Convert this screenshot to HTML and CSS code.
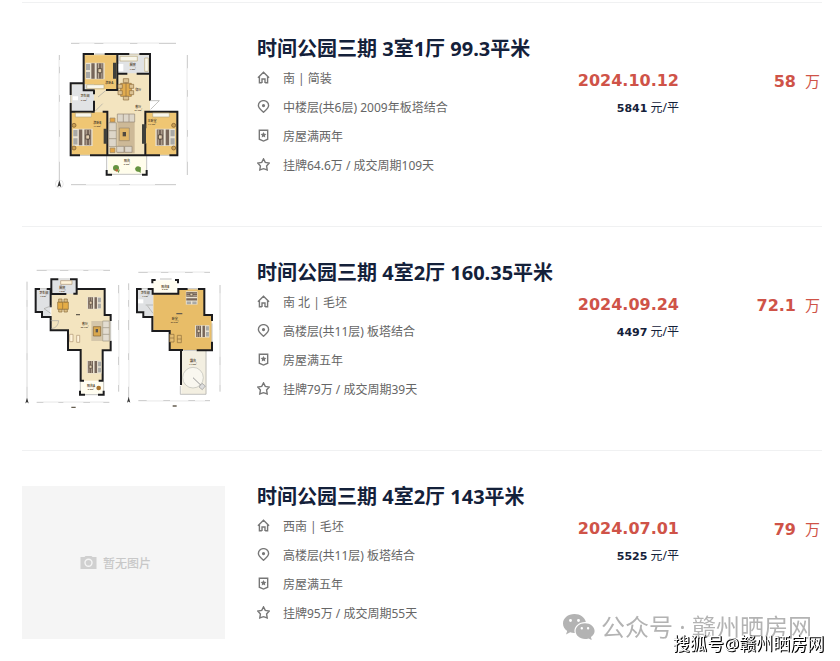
FILE: index.html
```html
<!DOCTYPE html>
<html lang="zh-CN">
<head>
<meta charset="utf-8">
<title>时间公园三期 成交记录</title>
<link rel="stylesheet" href="styles.css">
</head>
<body>
<svg class="defs" width="0" height="0" aria-hidden="true">
  <symbol id="i-home" viewBox="0 0 14 14"><path d="M1 7.200 7 1.400l6 5.800M2.600 6v6.600h2.600M11.400 6v6.600H8.800M5.400 13V8.600h3.200V13"/></symbol>
  <symbol id="i-pin" viewBox="0 0 14 14"><path d="M7 13.200C4.400 10.800 1.500 9 1.500 6a5.500 5.300 0 0 1 11 0c0 3-2.900 4.800-5.500 7.200z"/><circle cx="7" cy="6" r="1" fill="currentColor"/></symbol>
  <symbol id="i-badge" viewBox="0 0 14 14"><path d="M2.500 1.300h9v9.700L7 13l-4.500-2z"/><path d="M7 3.200l1 2 2.100.3-1.500 1.500.3 2.200L7 8.200l-1.900 1 .3-2.200-1.500-1.500L6 5.200z" fill="currentColor" stroke="none"/></symbol>
  <symbol id="i-star" viewBox="0 0 14 14"><path d="M7 1l1.900 3.700 4.300.8-2.900 3 .7 4.300L7 11.500l-4 1.300.7-4.300-2.900-3 4.300-.8z"/></symbol>
  <symbol id="bed" viewBox="0 0 60 54"><path fill="#e9e2d2" d="M0 2h58v50H0z"/><path fill="#77665a" d="M18 4h10v46H18zM34 4h20v46H34z"/><path fill="#b8aa98" d="M38 4h3v46h-3zM48 4h3v46h-3z"/><path fill="#a9a9a6" d="M2 6h12v18H2zM2 30h12v18H2z"/><path fill="#e4ceb0" stroke="#3d352b" stroke-width="2" d="M38 20h11v12H38z"/></symbol>
  <symbol id="north" viewBox="0 0 14 24"><path fill="#333" d="M7 0 13 22 7 17 1 22z"/></symbol>
</svg>

<main class="list">
  <article class="deal">
    <a class="photo" href="#" aria-label="3室1厅户型图">
      <svg viewBox="6 24 609 459">
        <g class="dims"><path d="M153 40h315M153 464h315M118 75v375M502 75v360"/><path class="gap" d="M178 40h45M250 40h80M352 40h65M198 464h100M330 464h75M118 90v20M118 130v65M118 215v85M118 320v75M502 115v65M502 200v100M502 320v75"/></g>
        <path fill="#f3e4bf" d="M190 73h200v172h85v130H152V160h38z"/>
        <path fill="#efc673" d="M193 76h97v102h-97zM155 247h106v127H155zM378 247h92v127h-92z"/>
        <path fill="#e1e3e5" d="M155 163h67v80h-67zM294 76h93v54h-93z"/>
        <path fill="#fffdeb" d="M264 377h114v54H264z"/>
        <g class="thin"><path d="M260 378v44M380 378v44M276 433h90M224 72h30M328 72h30M180 376h30M420 376h28M152 195v24"/></g>
        <path class="wall" d="M222 72h-31v109h33M254 72h74M358 72h32v140M292 74v106h-34M292 131h30M350 131h38M190 160h-38v35M152 219v157h28M210 376h210M448 376h24V245h-96v50M154 245h70M222 181v12M222 212v32M248 245h14v130M376 340v34M260 420v14h16M366 434h14v-14"/>
        <g fill="#3f403c"><path d="M279 98h10v48h-10zM251 296h11v45h-11zM366 283h12v58h-12z"/></g>
        <g fill="#f8f6eb" stroke="#baa878" stroke-width="2"><path d="M200 164h52v12h-52zM166 249h48v12h-48zM398 249h50v12h-50zM300 79h52v14h-52zM374 84h11v40h-11z"/></g>
        <path fill="#fff" d="M296 102h14v22h-14zM158 199h16v12h-16zM390 212h26l-26 24z"/>
        <path class="thin" d="M390 212h28l-26 26M226 243l22-22M258 181l-24 20"/>
        <use href="#bed" x="196" y="96" width="60" height="54"/><use href="#bed" x="158" y="293" width="62" height="58"/>
        <use href="#bed" transform="translate(466 293) scale(-1 1)" width="62" height="58"/>
        <path fill="#cdb997" d="M292 276h52v94h-52z"/>
        <g fill="#ddd6c9" stroke="#948772" stroke-width="2"><path d="M292 252h52v24h-52zM266 278h23v72h-23zM290 349h22v18h-22zM314 349h22v18h-22zM310 252v24M327 252v24M266 302h23M266 326h23"/><path fill="#e1b768" d="M298 294h30v38h-30z"/><path fill="#e3a544" d="M270 264h15v12h-15zM270 354h15v14h-15z"/></g>
        <path fill="#514b40" d="M308 306h10v13h-10z"/>
        <g stroke="#8d6b3c" stroke-width="2" fill="#dcc292"><path fill="#e2ac4e" d="M302 160h32v39h-32z"/><path d="M310 146h16v12h-16zM310 199h16v11h-16zM294 163h13v12h-13zM294 182h13v12h-13zM328 163h13v12h-13zM328 182h13v12h-13zM318 158v42"/></g>
        <g fill="#caa054" stroke="#75552a" stroke-width="2"><circle cx="162" cy="286" r="6"/><circle cx="162" cy="354" r="6"/><circle cx="461" cy="286" r="6"/><circle cx="461" cy="354" r="6"/></g>
        <g fill="#65933f"><circle cx="288" cy="414" r="9"/><circle cx="354" cy="417" r="8"/><path d="M292 424l8-6-4 11zM344 416l18-5v18z"/></g><circle cx="290" cy="421" r="4" fill="#bd6639"/>
        <g class="room"><text x="338" y="109">厨房</text><text x="355" y="183">餐厅</text><text x="355" y="234">客厅</text><text x="268" y="162">次卧A</text><text x="195" y="202">卫生间</text><text x="232" y="281">次卧B</text><text x="396" y="275">主卧室</text><text x="321" y="395">阳台</text></g>
        <g class="area"><text x="338" y="119">4.9m²</text><text x="355" y="244">24.7m²</text><text x="192" y="213">3.7m²</text><text x="232" y="292">14.2m²</text><text x="396" y="285">11.7m²</text><text x="321" y="405">5.6m²</text></g>
        <circle cx="118" cy="462" r="12" fill="none" stroke="#ddd" stroke-width="2"/><use href="#north" x="111" y="450" width="14" height="24"/>
      </svg>
    </a>
    <div class="info">
      <h2>时间公园三期 3室1厅 99.3平米</h2>
      <ul>
        <li><svg><use href="#i-home"/></svg>南 | 简装</li>
        <li><svg><use href="#i-pin"/></svg>中楼层(共6层) 2009年板塔结合</li>
        <li><svg><use href="#i-badge"/></svg>房屋满两年</li>
        <li><svg><use href="#i-star"/></svg>挂牌64.6万 / 成交周期109天</li>
      </ul>
    </div>
    <div class="when"><time datetime="2024-10-12">2024.10.12</time><p><b>5841</b> 元/平</p></div>
    <p class="price"><b>58</b>万</p>
  </article>

  <article class="deal">
    <a class="photo" href="#" aria-label="4室2厅户型图">
      <svg viewBox="6 6 609 459">
        <g class="dims"><path d="M50 31h220M50 427h218M21 65v348M296 75v320"/><path class="gap" d="M80 31h40M145 31h45M205 31h45M70 427h45M130 427h60M210 427h40M21 90v30M21 140v40M21 210v70M21 300v80M296 100v80M296 210v80M296 315v60"/></g>
        <path fill="#f3e4bf" d="M94 88h159v78h18v104h-23v92h-68v-92h-37v-58H94z"/>
        <path fill="#dfe1e3" d="M48 88h43v80H68v-14H48zM97 60h72v41H97z"/><path fill="#fffdf0" d="M181 364h70v38h-70z"/>
        <g class="thin"><path d="M60 86h20M115 57h35M195 404h40M272 180v60M181 365v30M251 365v30"/></g>
        <path class="wall" d="M60 87H47v69h19v15h26v40h52v59h38v92h10M80 87h12v55M115 58H94v44h45M150 58h20v43h-10M170 87h84v78h18v18M272 242v29h-24v91h-12M180 392v12h15M234 404h17v-12"/>
        <path fill="#fff4db" stroke="#ad9471" stroke-width="2" d="M122 62h34v11h-34zM149 223h10v22h-10zM170 226h9v21h-9z"/>
        <path class="thin" d="M92 182h24q-2 22-22 24M92 138l-20 8 20 14"/>
        <g transform="translate(245 109) scale(-1 1)"><use href="#bed" width="46" height="40"/></g><g transform="translate(245 300) scale(-1 1)"><use href="#bed" width="46" height="42"/></g>
        <path fill="#d4c6aa" d="M214 183h32v60h-32z"/><path fill="#d8a74e" stroke="#836437" stroke-width="2" d="M220 200h22v28h-22z"/><path fill="#555" d="M227 207h7v10h-7z"/>
        <path fill="#e3ddd1" stroke="#999181" stroke-width="2" d="M248 183h20v60h-20zM248 203h20M248 223h20"/>
        <g fill="#dcbf86" stroke="#896a3a" stroke-width="2"><path fill="#e5ad46" d="M113 126h32v22h-32z"/><path d="M116 117h10v9h-10zM132 117h10v9h-10zM116 148h10v8h-10zM132 148h10v8h-10zM128 126v22"/></g>
        <circle cx="236" cy="384" r="7" fill="#a8732d"/>
        <g class="room"><text x="71" y="101">卫生间</text><text x="127" y="88">厨房</text><text x="195" y="196">客厅</text><text x="213" y="381">阳台A</text></g>
        <g class="area"><text x="70" y="110">4.6m²</text><text x="127" y="96">4.2m²</text><text x="194" y="205">55.7m²</text><text x="213" y="390">5.2m²</text></g>
        <path class="label" d="M168 164h12M154 442h13"/><use href="#north" x="15" y="412" width="12" height="20"/>
        <g transform="translate(300 0)">
          <g class="dims"><path d="M55 37h215M55 422h215M26 70v345M300 75v320"/><path class="gap" d="M83 37h40M145 37h50M218 37h35M80 422h50M150 422h55M225 422h30M26 90v30M26 140v40M26 210v70M26 300v80M300 100v80M300 210v80M300 315v60"/></g>
          <path fill="#e8bd68" d="M100 101h74V88h79v78h22v104H150v-57h-50z"/><path fill="#dfe1e3" d="M52 89h47v81H74v-14H52z"/><path fill="#fffdf0" d="M98 61h75v39H98z"/><path fill="#f3efe1" d="M184 273h75v129h-75z"/>
          <g class="thin"><path d="M65 86h18M120 57h35M190 271h40M258 273v130h-77v-25M204 86h30M276 190v55"/></g>
          <path class="wall" d="M65 87H51v70h19v14h27v42h52v57h40M83 87h15v14h77V87h28M234 87h19v78h23v18M276 245v26h-46M97 70V60h10M165 60h9v10M183 271v104"/>
          <path class="thin" d="M77 135h22M82 137l17 23"/><path fill="#fff" d="M54 118h16v12H54z"/>
          <g transform="translate(195 134) rotate(-90)"><use href="#bed" width="42" height="40"/></g><g transform="translate(271 194) scale(-1 1)"><use href="#bed" width="50" height="40"/></g>
          <path fill="#e4bd73" stroke="#8c6d39" stroke-width="2" d="M149 223h13v23h-13zM172 226h12v22h-12zM149 234h13M172 237h12"/>
          <circle cx="219" cy="353" r="31" fill="#f9f7ef" stroke="#b9b9b4" stroke-width="2"/><path d="M219 353l27 26" stroke="#999" stroke-width="3"/><path fill="#ddd" stroke="#999" stroke-width="2" d="M246 370l10 8-9 11-10-8z"/>
          <g class="room"><text x="76" y="101">卫生间</text><text x="136" y="83">阳台B</text><text x="164" y="181">卧室</text><text x="219" y="305">露台</text></g>
          <g class="area"><text x="76" y="110">4.7m²</text><text x="136" y="91">5.2m²</text><text x="164" y="190">53.2m²</text><text x="219" y="314">11.5m²</text></g>
          <path class="label" d="M169 161h18M158 438h12"/><use href="#north" x="20" y="410" width="12" height="20"/>
        </g>
      </svg>
    </a>
    <div class="info">
      <h2>时间公园三期 4室2厅 160.35平米</h2>
      <ul>
        <li><svg><use href="#i-home"/></svg>南 北 | 毛坯</li>
        <li><svg><use href="#i-pin"/></svg>高楼层(共11层) 板塔结合</li>
        <li><svg><use href="#i-badge"/></svg>房屋满五年</li>
        <li><svg><use href="#i-star"/></svg>挂牌79万 / 成交周期39天</li>
      </ul>
    </div>
    <div class="when"><time datetime="2024-09-24">2024.09.24</time><p><b>4497</b> 元/平</p></div>
    <p class="price"><b>72.1</b>万</p>
  </article>

  <article class="deal">
    <a class="photo empty" href="#">
      <svg viewBox="0 0 16 13"><path fill="#d0d0d0" fill-rule="evenodd" d="M0 1h4l1-1h6l1 1h4v12H0zM8 2.500a4.200 4.200 0 1 0 0 8.400 4.200 4.200 0 0 0 0-8.400z"/><circle cx="8" cy="6.700" r="2.800" fill="#d0d0d0"/></svg>暂无图片
    </a>
    <div class="info">
      <h2>时间公园三期 4室2厅 143平米</h2>
      <ul>
        <li><svg><use href="#i-home"/></svg>西南 | 毛坯</li>
        <li><svg><use href="#i-pin"/></svg>高楼层(共11层) 板塔结合</li>
        <li><svg><use href="#i-badge"/></svg>房屋满五年</li>
        <li><svg><use href="#i-star"/></svg>挂牌95万 / 成交周期55天</li>
      </ul>
    </div>
    <div class="when"><time datetime="2024-07-01">2024.07.01</time><p><b>5525</b> 元/平</p></div>
    <p class="price"><b>79</b>万</p>
  </article>
</main>

<div class="wechat">
  <svg viewBox="0 0 32 26"><path fill="#b3b3b3" fill-rule="evenodd" d="M11.500 0C5 0 0 4.200 0 9.500c0 3 1.600 5.600 4.200 7.400L3 20.500l4.200-2.200c1.400.4 3 .7 4.600.6A8.500 8.500 0 0 1 11.400 17c0-5 4.700-9 10.700-9h.7C21.800 3.400 17.200 0 11.500 0zM7.500 5a1.400 1.400 0 1 1 0 2.900 1.400 1.400 0 0 1 0-2.900zm8 0a1.400 1.400 0 1 1 0 2.900 1.400 1.400 0 0 1 0-2.900z"/><path fill="#b3b3b3" fill-rule="evenodd" d="M22 9.200c-5.300 0-9.400 3.500-9.400 7.900s4.100 7.900 9.400 7.900c1.300 0 2.500-.2 3.500-.6l3.300 1.600-.9-3c2.300-1.500 3.700-3.500 3.700-5.900 0-4.400-4.300-7.900-9.600-7.900zM18.800 13a1.200 1.200 0 1 1 0 2.400 1.200 1.200 0 0 1 0-2.400zm6.300 0a1.200 1.200 0 1 1 0 2.400 1.200 1.200 0 0 1 0-2.400z"/></svg>
  公众号 · 赣州晒房网
</div>
<div class="source">搜狐号@赣州晒房网</div>
</body>
</html>
```
FILE: styles.css
```css
* { box-sizing: border-box; }
body {
  margin: 0;
  background: #fff;
  color: #14213a;
  font-family: "Noto Sans", "Noto Sans CJK SC", sans-serif;
  font-size: 12px;
}
h2, p, ul { margin: 0; padding: 0; }
.defs { position: absolute; }

.list { padding: 2px 18px 0 22px; }
.deal {
  display: grid;
  grid-template-columns: 203px minmax(0, 1fr) 110px 143px;
  border-top: 1px solid #f0f1f2;
  padding: 35px 0;
}

.photo { display: block; height: 153px; }
.photo svg { display: block; width: 100%; height: 100%; }
.empty {
  display: flex;
  align-items: center;
  justify-content: center;
  gap: 6px;
  padding-right: 16px;
  background: #f5f5f5;
  color: #c8c8c8;
  text-decoration: none;
  font-weight: 500;
}
.empty svg { width: 17px; height: 13px; }

.wall { fill: none; stroke: #1c1c1e; stroke-width: 6; }
.thin { fill: none; stroke: #a5a5a0; stroke-width: 2; }
.dims { fill: none; stroke: #aaa; stroke-width: 2; }
.dims .gap { stroke: #f2f2f2; stroke-width: 4; }
.label { stroke: #655e50; stroke-width: 4; }
.room, .area { fill: #54462f; text-anchor: middle; font-size: 9px; font-weight: 700; }
.area { font-size: 7px; }

.info { padding-left: 32px; white-space: nowrap; }
h2 { font-size: 20px; line-height: 26px; color: #14213a; margin-top: -2px; }
.info ul { list-style: none; margin-top: 1px; }
.info li {
  display: flex;
  align-items: center;
  gap: 13px;
  height: 29px;
  color: #666;
}
.info li svg { width: 13px; height: 13px; fill: none; stroke: #777; stroke-width: 1.5; color: #777; }

.when { padding-top: 30px; text-align: right; white-space: nowrap; }
.when time {
  display: block;
  font: bold 16px/26px "DejaVu Sans", sans-serif;
  color: #cf5348;
}
.when p { line-height: 28px; }
.when b { font-family: "DejaVu Sans", sans-serif; font-size: 11px; }
.price {
  display: flex;
  justify-content: flex-end;
  align-items: baseline;
  gap: 9px;
  padding: 30px 2px 0 0;
  line-height: 26px;
  font-size: 15px;
  color: #cf5348;
}
.price b { font: bold 16px/26px "DejaVu Sans", sans-serif; }

.wechat {
  position: fixed;
  right: 28px;
  bottom: 18px;
  display: flex;
  align-items: center;
  gap: 6px;
  font-size: 24px;
  line-height: 32px;
  color: #b3b3b3;
}
.wechat svg { width: 32px; height: 26px; }
.source {
  position: fixed;
  right: 16px;
  bottom: 5px;
  font-size: 17px;
  line-height: 24px;
  color: #fff;
  text-shadow: 1px 1px 0 #000, 1px 0 0 #000;
}
```
